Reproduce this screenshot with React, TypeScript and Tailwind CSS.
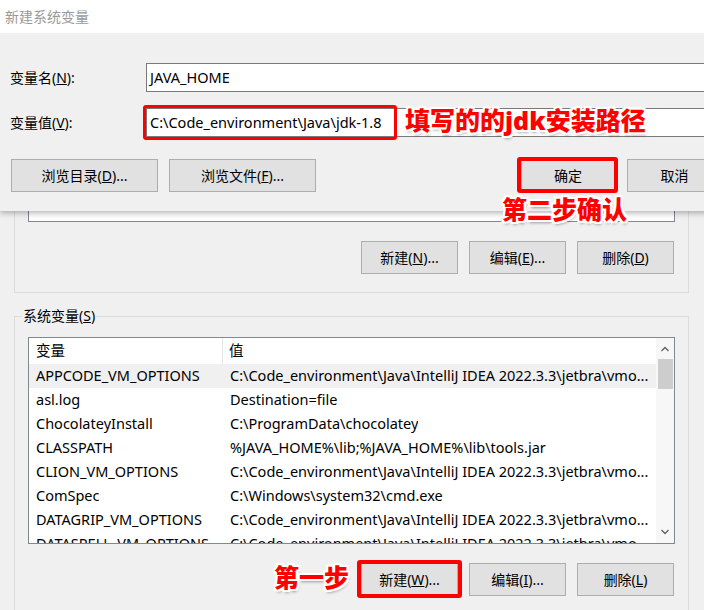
const vmo = "C:\\Code_environment\\Java\\IntelliJ IDEA 2022.3.3\\jetbra\\vmo...";

const rows = [
  ["APPCODE_VM_OPTIONS", vmo],
  ["asl.log", "Destination=file"],
  ["ChocolateyInstall", "C:\\ProgramData\\chocolatey"],
  ["CLASSPATH", "%JAVA_HOME%\\lib;%JAVA_HOME%\\lib\\tools.jar"],
  ["CLION_VM_OPTIONS", vmo],
  ["ComSpec", "C:\\Windows\\system32\\cmd.exe"],
  ["DATAGRIP_VM_OPTIONS", vmo],
  ["DATASPELL_VM_OPTIONS", vmo],
];

const Btn = ({ children, w = "w-[97px]" }: { children: React.ReactNode; w?: string }) => (
  <div className={`${w} h-[33px] shrink-0 border border-[#adadad] bg-[#e1e1e1] flex items-center justify-center text-[14px] text-black`}>
    {children}
  </div>
);

const note =
  "absolute text-[#ff0000] font-black text-[25px] leading-none whitespace-nowrap [text-shadow:-2px_0_#fff,2px_0_#fff,0_-2px_#fff,0_2px_#fff,-2px_-2px_#fff,2px_2px_#fff,-2px_2px_#fff,2px_-2px_#fff,1px_3px_3px_rgba(0,0,0,0.35)]";

const App = () => {
  return (
    <div className="relative w-[704px] h-[610px] overflow-hidden bg-[#f0f0f0] font-['Noto_Sans','Noto_Sans_CJK_SC',sans-serif] text-[14.5px] text-black">
      {/* parent window behind the dialog */}
      <div className="pl-[14px] pr-[15px]">
        <div className="h-[293px] border-x border-b border-[#dcdcdc] px-[13px] flex flex-col">
          <div className="h-[222px] border-x border-b border-[#828790] bg-white" />
          <div className="mt-[19px] pr-[1px] flex justify-end gap-[11px]">
            <Btn>
              新建(<span className="underline">N</span>)...
            </Btn>
            <Btn>
              编辑(<span className="underline">E</span>)...
            </Btn>
            <Btn>
              删除(<span className="underline">D</span>)
            </Btn>
          </div>
        </div>

        <fieldset className="mt-[13px] h-[400px] border border-[#dcdcdc] px-[13px]">
          <legend className="ml-[-6px] px-[1px] leading-[20px] text-[14px]">
            系统变量(<span className="underline">S</span>)
          </legend>
          <div className="mt-[11px] h-[207px] border border-[#828790] bg-white flex overflow-hidden">
            <div className="flex-1 min-w-0">
              <div className="h-[26px] flex items-center">
                <div className="w-[194px] h-full pl-[7px] flex items-center border-r border-[#e5e5e5]">变量</div>
                <div className="pl-[6px]">值</div>
              </div>
              {rows.map(([k, v], i) => (
                <div key={k} className={`h-[24px] flex items-center ${i === 0 ? "bg-[#f0f0f0]" : ""}`}>
                  <div className="w-[194px] pl-[7px] whitespace-nowrap">{k}</div>
                  <div className="pl-[7px] whitespace-nowrap overflow-hidden">{v}</div>
                </div>
              ))}
            </div>
            <div className="w-[18px] shrink-0 bg-[#f7f7f7] flex flex-col items-center">
              <svg width="10" height="20" viewBox="0 0 10 20" className="mt-[1px]">
                <path d="M1.5 12 L5 8.5 L8.5 12" fill="none" stroke="#606060" strokeWidth="1.3" />
              </svg>
              <div className="w-[15px] h-[30px] bg-[#cdcdcd]" />
              <div className="flex-1" />
              <svg width="10" height="20" viewBox="0 0 10 20" className="mb-[1px]">
                <path d="M1.5 8 L5 11.5 L8.5 8" fill="none" stroke="#606060" strokeWidth="1.3" />
              </svg>
            </div>
          </div>
          <div className="mt-[19px] pr-[1px] flex justify-end gap-[11px]">
            <Btn>
              新建(<span className="underline">W</span>)...
            </Btn>
            <Btn>
              编辑(<span className="underline">I</span>)...
            </Btn>
            <Btn>
              删除(<span className="underline">L</span>)
            </Btn>
          </div>
        </fieldset>
      </div>

      {/* new system variable dialog */}
      <div className="absolute top-0 left-0 w-[760px] h-[211px] bg-[#f0f0f0] shadow-[0_2px_6px_rgba(0,0,0,0.3)]">
        <div className="h-[33px] bg-white pl-[5px] flex items-center text-[#999999] text-[14px]">新建系统变量</div>
        <div className="mt-[30px] flex items-center h-[29px]">
          <div className="w-[146px] pl-[10px] text-[14px]">
            变量名(<span className="underline">N</span>):
          </div>
          <div className="flex-1 h-full border border-[#7a7a7a] bg-white pl-[3px] flex items-center">JAVA_HOME</div>
        </div>
        <div className="mt-[16px] flex items-center h-[29px]">
          <div className="w-[146px] pl-[10px] text-[14px]">
            变量值(<span className="underline">V</span>):
          </div>
          <div className="flex-1 h-full border border-[#7a7a7a] bg-white pl-[3px] flex items-center">
            C:\Code_environment\Java\jdk-1.8
          </div>
        </div>
        <div className="mt-[22px] flex pl-[11px]">
          <div className="flex gap-[11px]">
            <Btn w="w-[147px]">
              浏览目录(<span className="underline">D</span>)...
            </Btn>
            <Btn w="w-[147px]">
              浏览文件(<span className="underline">F</span>)...
            </Btn>
          </div>
          <div className="ml-[205px] flex gap-[12px]">
            <Btn w="w-[94px]">确定</Btn>
            <Btn w="w-[95px]">取消</Btn>
          </div>
        </div>
      </div>

      {/* annotations */}
      <div className="absolute left-[143px] top-[105px] w-[254px] h-[35px] border-[3px] border-[#ff0000] rounded-[3px]" />
      <div className={`${note} left-[405px] top-[108px]`}>填写的的jdk安装路径</div>
      <div className="absolute left-[517px] top-[157px] w-[101px] h-[36px] border-[4px] border-[#ff0000] rounded-[3px]" />
      <div className={`${note} left-[502px] top-[197px]`}>第二步确认</div>
      <div className="absolute left-[357px] top-[560px] w-[105px] h-[38px] border-[4px] border-[#ff0000] rounded-[3px]" />
      <div className={`${note} left-[274px] top-[565px]`}>第一步</div>
    </div>
  );
};

export default App;
